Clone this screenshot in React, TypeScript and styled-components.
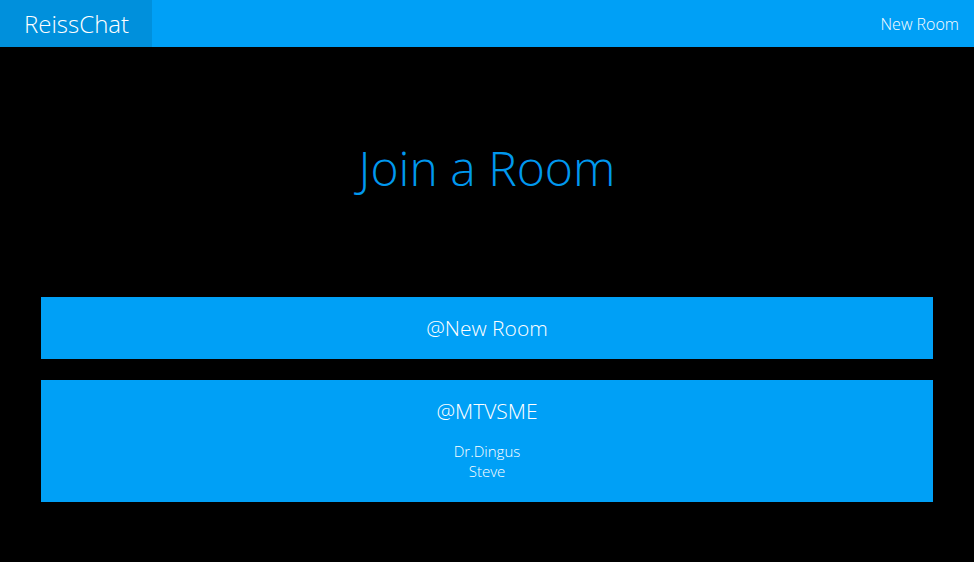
import React from 'react';
import styled, { createGlobalStyle } from 'styled-components';

const GlobalStyle = createGlobalStyle`
  html, body {
    margin: 0;
    padding: 0;
    background: #000;
    font-family: 'Open Sans', 'Noto Sans', sans-serif;
  }
`;

const Page = styled.div`
  min-height: 562px;
  background: #000;
`;

const Header = styled.header`
  display: flex;
  align-items: center;
  justify-content: space-between;
  height: 47px;
  background: #00a0f6;
`;

const Brand = styled.div`
  display: flex;
  align-items: center;
  height: 100%;
  width: 152px;
  box-sizing: border-box;
  padding-left: 24px;
  background: #0090dc;
  color: #fff;
  font-size: 24px;
  font-weight: 300;
`;

const NavLink = styled.a`
  margin-right: 15px;
  color: #fff;
  font-size: 16px;
  font-weight: 300;
  text-decoration: none;
  cursor: pointer;
`;

const Title = styled.h1`
  margin: 94px 0 103px;
  text-align: center;
  color: #0098ee;
  font-size: 48px;
  font-weight: 300;
  line-height: 53px;
`;

const RoomList = styled.div`
  display: flex;
  flex-direction: column;
  gap: 21px;
  padding: 0 41px;
`;

const RoomCard = styled.div`
  padding: 16px 0;
  background: #00a0f6;
  color: #fff;
  text-align: center;
  cursor: pointer;
`;

const RoomName = styled.div`
  font-size: 21px;
  font-weight: 300;
  line-height: 30px;
`;

const Members = styled.div`
  margin: 15px 0 5px;
  font-size: 15px;
  font-weight: 300;
  line-height: 20px;
`;

const rooms = [
  { name: 'New Room', users: [] as string[] },
  { name: 'MTVSME', users: ['Dr.Dingus', 'Steve'] },
];

export default function App() {
  return (
    <Page>
      <GlobalStyle />
      <Header>
        <Brand>ReissChat</Brand>
        <NavLink>New Room</NavLink>
      </Header>
      <Title>Join a Room</Title>
      <RoomList>
        {rooms.map(room => (
          <RoomCard key={room.name}>
            <RoomName>@{room.name}</RoomName>
            {room.users.length > 0 && (
              <Members>
                {room.users.map(u => (
                  <div key={u}>{u}</div>
                ))}
              </Members>
            )}
          </RoomCard>
        ))}
      </RoomList>
    </Page>
  );
}
